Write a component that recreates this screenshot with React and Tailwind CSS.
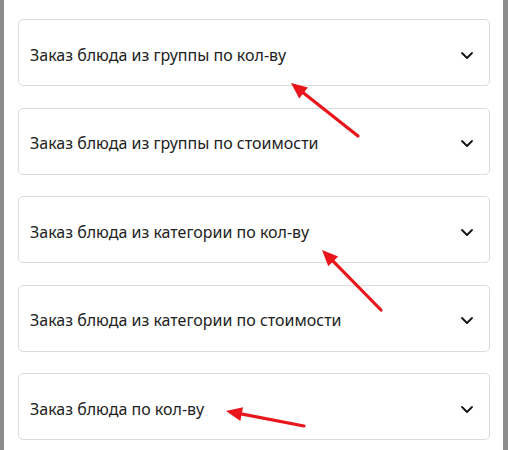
import React from "react";

const items = [
  "Заказ блюда из группы по кол-ву",
  "Заказ блюда из группы по стоимости",
  "Заказ блюда из категории по кол-ву",
  "Заказ блюда из категории по стоимости",
  "Заказ блюда по кол-ву",
];

function Chevron() {
  return (
    <svg width="14" height="10" viewBox="0 0 14 10" className="shrink-0">
      <path d="M2 3 L7 8 L12 3" fill="none" stroke="#111" strokeWidth="1.8" strokeLinecap="round" strokeLinejoin="round" />
    </svg>
  );
}

function Arrow({ x1, y1, x2, y2 }) {
  const dx = x2 - x1, dy = y2 - y1;
  const len = Math.hypot(dx, dy);
  const ux = dx / len, uy = dy / len;
  const hl = 16, hw = 7;
  const bx = x2 - ux * hl, by = y2 - uy * hl;
  const px = -uy, py = ux;
  const pts = `${x2},${y2} ${bx + px * hw},${by + py * hw} ${bx - px * hw},${by - py * hw}`;
  return (
    <g>
      <line x1={x1} y1={y1} x2={bx + ux * 2} y2={by + uy * 2} stroke="#e8161b" strokeWidth="3.2" strokeLinecap="round" />
      <polygon points={pts} fill="#e8161b" />
    </g>
  );
}

export default function App() {
  return (
    <div className="relative w-[508px] h-[450px] bg-white flex overflow-hidden" style={{ fontFamily: '"Noto Sans", "Open Sans", sans-serif' }}>
      <div className="w-[4px] bg-[#8c8c8c] shrink-0" />
      <div className="flex-1 flex flex-col gap-[21.5px] pt-[19px] pl-[14px] pr-[13px]">
        {items.map((t) => (
          <div key={t} className="h-[67px] shrink-0 border border-[#dcdcdc] rounded-[5px] flex items-center justify-between pl-[11px] pr-[15px] pt-[4px]">
            <span className="text-[16px] text-[#222]">{t}</span>
            <Chevron />
          </div>
        ))}
      </div>
      <div className="w-[5px] bg-[#8c8c8c] shrink-0" />
      <svg className="absolute inset-0 pointer-events-none" width="508" height="450">
        <Arrow x1={358} y1={136} x2={291} y2={83} />
        <Arrow x1={381} y1={310} x2={322} y2={250} />
        <Arrow x1={304} y1={426} x2={226} y2={411} />
      </svg>
    </div>
  );
}
